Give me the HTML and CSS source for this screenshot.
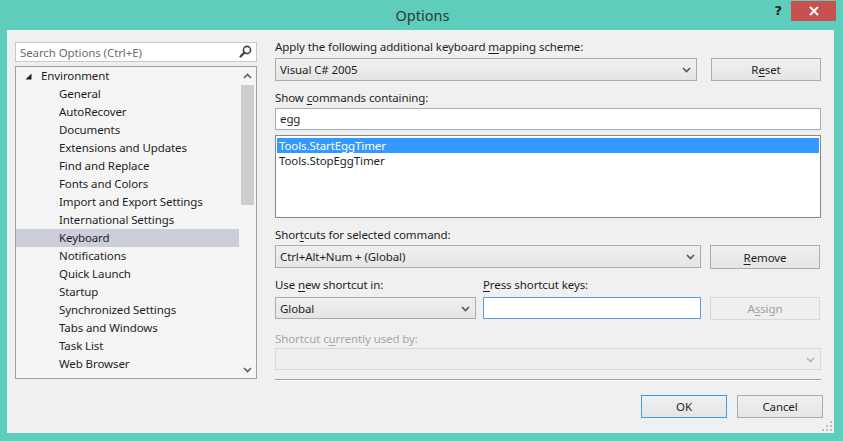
FILE: index.html
```html
<!DOCTYPE html>
<html>
<head>
<meta charset="utf-8">
<title>Options</title>
<link rel="stylesheet" href="styles.css">
</head>
<body>
<div class="window">
  <div class="titlebar">
    <div class="tb-spacer"></div>
    <div class="title">Options</div>
    <div class="tb-controls">
      <span class="help">?</span>
      <span class="close"><svg width="10" height="10" viewBox="0 0 10 10"><path d="M1 1 L9 9 M9 1 L1 9" stroke="#fff" stroke-width="2"/></svg></span>
    </div>
  </div>
  <div class="client">
    <div class="main">
      <div class="left">
        <div class="search">
          <span class="search-ph">Search Options (Ctrl+E)</span>
          <svg class="search-icon" width="13" height="13" viewBox="0 0 13 13"><circle cx="8" cy="5" r="3.6" fill="none" stroke="#444" stroke-width="1.6"/><path d="M5.4 7.6 L1.5 11.5" stroke="#444" stroke-width="2.2" stroke-linecap="round"/></svg>
        </div>
        <div class="tree">
          <div class="tree-items">
            <div class="node root"><svg class="expander" width="7" height="7" viewBox="0 0 7 7"><path d="M6.5 0.5 L6.5 6.5 L0.5 6.5 Z" fill="#1e1e1e"/></svg>Environment</div>
            <div class="node child">General</div>
            <div class="node child">AutoRecover</div>
            <div class="node child">Documents</div>
            <div class="node child">Extensions and Updates</div>
            <div class="node child">Find and Replace</div>
            <div class="node child">Fonts and Colors</div>
            <div class="node child">Import and Export Settings</div>
            <div class="node child">International Settings</div>
            <div class="node child selected">Keyboard</div>
            <div class="node child">Notifications</div>
            <div class="node child">Quick Launch</div>
            <div class="node child">Startup</div>
            <div class="node child">Synchronized Settings</div>
            <div class="node child">Tabs and Windows</div>
            <div class="node child">Task List</div>
            <div class="node child">Web Browser</div>
            <div class="node root"><span class="expander-space"></span>Projects and Solutions</div>
          </div>
          <div class="vscroll">
            <div class="sb-arrow"><svg width="9" height="6" viewBox="0 0 9 6"><path d="M1 5 L4.5 1.5 L8 5" fill="none" stroke="#606060" stroke-width="1.6"/></svg></div>
            <div class="sb-track"><div class="sb-thumb"></div></div>
            <div class="sb-arrow"><svg width="9" height="6" viewBox="0 0 9 6"><path d="M1 1 L4.5 4.5 L8 1" fill="none" stroke="#606060" stroke-width="1.6"/></svg></div>
          </div>
        </div>
      </div>
      <div class="right">
        <div class="label l1">Apply the following additional keyboard <u>m</u>apping scheme:</div>
        <div class="row r1">
          <div class="combo wide1"><span>Visual C# 2005</span><svg class="chev" width="9" height="6" viewBox="0 0 9 6"><path d="M1 1 L4.5 4.5 L8 1" fill="none" stroke="#555" stroke-width="1.6"/></svg></div>
          <div class="button">R<u>e</u>set</div>
        </div>
        <div class="label l2">Show <u>c</u>ommands containing:</div>
        <div class="textbox t1">egg</div>
        <div class="listbox">
          <div class="item sel">Tools.StartEggTimer</div>
          <div class="item">Tools.StopEggTimer</div>
        </div>
        <div class="label l3">Shor<u>t</u>cuts for selected command:</div>
        <div class="row r2">
          <div class="combo wide2"><span>Ctrl+Alt+Num + (Global)</span><svg class="chev" width="9" height="6" viewBox="0 0 9 6"><path d="M1 1 L4.5 4.5 L8 1" fill="none" stroke="#555" stroke-width="1.6"/></svg></div>
          <div class="button tall"><u>R</u>emove</div>
        </div>
        <div class="row labels">
          <div class="label col-a">Use <u>n</u>ew shortcut in:</div>
          <div class="label col-b"><u>P</u>ress shortcut keys:</div>
        </div>
        <div class="row r3">
          <div class="combo narrow"><span>Global</span><svg class="chev" width="9" height="6" viewBox="0 0 9 6"><path d="M1 1 L4.5 4.5 L8 1" fill="none" stroke="#555" stroke-width="1.6"/></svg></div>
          <div class="textbox keys"></div>
          <div class="button disabled">A<u>s</u>sign</div>
        </div>
        <div class="label l4 dim">Shortcut c<u>u</u>rrently used by:</div>
        <div class="combo full disabled"><span></span><svg class="chev" width="9" height="6" viewBox="0 0 9 6"><path d="M1 1 L4.5 4.5 L8 1" fill="none" stroke="#b5b5b5" stroke-width="1.6"/></svg></div>
        <div class="separator"></div>
      </div>
    </div>
    <div class="footer">
      <div class="button ok">OK</div>
      <div class="button cancel">Cancel</div>
    </div>
    <div class="grip">
      <svg width="10" height="10" viewBox="0 0 10 10" fill="#bcbcbc"><rect x="8" y="0" width="2" height="2"/><rect x="4" y="4" width="2" height="2"/><rect x="8" y="4" width="2" height="2"/><rect x="0" y="8" width="2" height="2"/><rect x="4" y="8" width="2" height="2"/><rect x="8" y="8" width="2" height="2"/></svg>
    </div>
  </div>
</div>
</body>
</html>
```
FILE: styles.css
```css
html, body {
  margin: 0;
  padding: 0;
}
body {
  width: 843px;
  height: 441px;
  background: #5fcdbb;
  font-family: "Noto Sans", "Open Sans", sans-serif;
  font-size: 11.5px;
  letter-spacing: -0.1px;
  color: #1e1e1e;
  overflow: hidden;
}
u {
  text-decoration: underline;
  text-underline-offset: 2px;
}
.window {
  width: 843px;
  height: 441px;
  display: flex;
  flex-direction: column;
}
.titlebar {
  height: 30px;
  display: grid;
  grid-template-columns: 1fr auto 1fr;
  align-items: start;
}
.title {
  font-family: "Noto Sans", sans-serif;
  font-size: 14.5px;
  letter-spacing: 0;
  color: #2b3b38;
  line-height: 30px;
  padding-left: 2px;
}
.tb-controls {
  justify-self: end;
  display: flex;
  align-items: center;
  margin-right: 7px;
}
.help {
  font-family: "DejaVu Sans", sans-serif;
  font-weight: bold;
  font-size: 13px;
  color: #222;
  margin-right: 9px;
  line-height: 20px;
  margin-top: 1px;
}
.close {
  width: 45px;
  height: 20px;
  background: #c75050;
  display: flex;
  align-items: center;
  justify-content: center;
}
.client {
  margin: 0 9px 0 7px;
  height: 403px;
  background: #f0f0f0;
  display: flex;
  flex-direction: column;
  position: relative;
}
.main {
  display: flex;
  padding: 9px 0 0 8px;
  gap: 18px;
}
.left {
  width: 242px;
  padding-top: 3px;
  display: flex;
  flex-direction: column;
}
.search {
  border: 1px solid #c7c9ce;
  background: #fff;
  display: flex;
  align-items: center;
  justify-content: space-between;
  padding: 0 4px 0 4px;
  box-sizing: border-box;
  height: 20px;
}
.search-ph {
  color: #6d6d6d;
}
.search-icon {
  margin-top: -1px;
}
.tree {
  margin-top: 4px;
  height: 313px;
  box-sizing: border-box;
  border: 1px solid #a0a0a0;
  background: #f5f5f5;
  display: flex;
  overflow: hidden;
}
.tree-items {
  flex: 1;
  overflow: hidden;
}
.node {
  height: 18px;
  line-height: 18px;
  white-space: nowrap;
  display: flex;
  align-items: center;
}
.node.root {
  padding-left: 9px;
}
.expander {
  margin-right: 9px;
  margin-top: 1px;
}
.expander-space {
  display: inline-block;
  width: 16px;
}
.node.child {
  padding-left: 43px;
}
.node.selected {
  background: #cccedb;
}
.vscroll {
  width: 17px;
  display: flex;
  flex-direction: column;
  background: #f5f5f5;
}
.sb-arrow {
  height: 17px;
  display: flex;
  align-items: center;
  justify-content: center;
}
.sb-track {
  flex: 1;
  padding: 0 2px;
}
.sb-thumb {
  height: 120px;
  margin-top: 1px;
  background: #cdcdcd;
}
.right {
  width: 546px;
  display: flex;
  flex-direction: column;
}
.label {
  height: 16px;
  line-height: 16px;
  white-space: nowrap;
}
.label.dim {
  color: #a7a7a7;
}
.l1 { margin-top: 0; }
.row {
  display: flex;
}
.r1 { margin-top: 3px; height: 23px; gap: 14px; }
.l2 { margin-top: 9px; }
.combo {
  box-sizing: border-box;
  height: 23px;
  border: 1px solid #acacac;
  background: linear-gradient(#f0f0f0, #e5e5e5);
  display: flex;
  align-items: center;
  justify-content: space-between;
  padding: 0 5px 0 4px;
  white-space: nowrap;
}
.combo.wide1 { width: 422px; }
.combo.wide2 { width: 426px; }
.combo.narrow { width: 201px; height: 22px; }
.combo.full { width: 546px; height: 22px; margin-top: 1px; }
.combo.disabled {
  border-color: #d9d9d9;
  background: #efefef;
}
.chev { margin-top: 1px; }
.button {
  box-sizing: border-box;
  width: 110px;
  height: 23px;
  border: 1px solid #adadad;
  background: linear-gradient(#f0f0f0, #e5e5e5);
  display: flex;
  align-items: center;
  justify-content: center;
  white-space: nowrap;
}
.button.tall { height: 24px; }
.button.disabled {
  border-color: #d9d9d9;
  background: #efefef;
  color: #a0a0a0;
  height: 23px;
}
.textbox {
  box-sizing: border-box;
  border: 1px solid #abadb3;
  background: #fff;
  height: 22px;
  line-height: 20px;
  padding-left: 4px;
}
.t1 { margin-top: 2px; width: 546px; }
.listbox {
  margin-top: 5px;
  box-sizing: border-box;
  height: 83px;
  border: 1px solid #828790;
  background: #fff;
  padding: 2px 1px;
}
.item {
  height: 15px;
  line-height: 15px;
  padding-left: 2px;
  white-space: nowrap;
}
.item.sel {
  background: #3399ff;
  color: #fff;
}
.l3 { margin-top: 9px; }
.r2 { margin-top: 2px; gap: 9px; align-items: flex-start; }
.labels { margin-top: 8px; }
.col-a { width: 208px; }
.r3 { margin-top: 4px; gap: 8px; }
.textbox.keys {
  width: 218px;
  height: 22px;
  border-color: #569de5;
  margin-left: -1px;
}
.r3 .button { margin-left: 1px; }
.l4 { margin-top: 11px; }
.separator {
  margin-top: 9px;
  height: 1px;
  background: #a0a0a0;
  border-bottom: 1px solid #ffffff;
}
.footer {
  display: flex;
  justify-content: flex-end;
  gap: 10px;
  padding: 14px 11px 0 0;
}
.button.ok {
  width: 86px;
  border-color: #3c9be6;
}
.button.cancel {
  width: 86px;
}
.grip {
  position: absolute;
  right: 2px;
  bottom: 2px;
  width: 10px;
  height: 10px;
}
.grip svg { display: block; }
```
